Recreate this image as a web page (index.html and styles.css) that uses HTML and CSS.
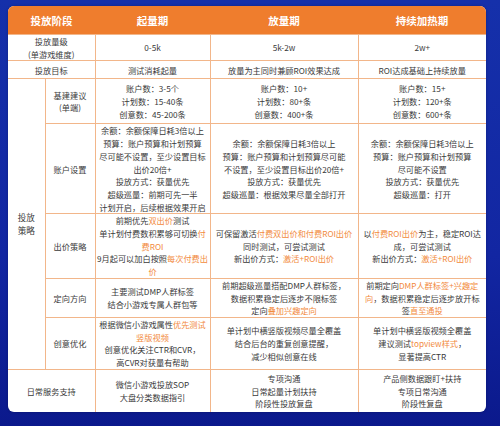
FILE: index.html
```html
<!DOCTYPE html>
<html lang="zh">
<head>
<meta charset="utf-8">
<link rel="stylesheet" href="styles.css">
</head>
<body>
<div class="card">
<table class="plan">
<colgroup>
<col class="c1"><col class="c2"><col class="c3"><col class="c4"><col class="c5">
</colgroup>
<thead>
<tr class="hd">
<th colspan="2">投放阶段</th>
<th>起量期</th>
<th>放量期</th>
<th>持续加热期</th>
</tr>
</thead>
<tbody>
<tr class="r1">
<td colspan="2">投放量级<br>(单游戏维度)</td>
<td>0-5k</td>
<td>5k-2w</td>
<td>2w+</td>
</tr>
<tr class="r2">
<td colspan="2">投放目标</td>
<td>测试消耗起量</td>
<td>放量为主同时兼顾ROI效果达成</td>
<td>ROI达成基础上持续放量</td>
</tr>
<tr class="r3">
<td rowspan="5" class="group">投放<br>策略</td>
<td>基建建议<br>(单端)</td>
<td>账户数：3-5个<br>计划数：15-40条<br>创意数：45-200条</td>
<td>账户数：10+<br>计划数：80+条<br>创意数：400+条</td>
<td>账户数：15+<br>计划数：120+条<br>创意数：600+条</td>
</tr>
<tr class="r4">
<td>账户设置</td>
<td>余额：余额保障日耗3倍以上<br>预算：账户预算和计划预算<br>尽可能不设置，至少设置目标<br>出价20倍+<br>投放方式：获量优先<br>超级巡量：前期可先一半<br>计划开启，后续根据效果开启</td>
<td>余额：余额保障日耗3倍以上<br>预算：账户预算和计划预算尽可能<br>不设置，至少设置目标出价20倍+<br>投放方式：获量优先<br>超级巡量：根据效果尽量全部打开</td>
<td>余额：余额保障日耗3倍以上<br>预算：账户预算和计划预算<br>尽可能不设置<br>投放方式：获量优先<br>超级巡量：打开</td>
</tr>
<tr class="r5">
<td>出价策略</td>
<td>前期优先<span class="hl">双出价</span>测试<br>单计划付费数积累够可切换<span class="hl">付<br>费ROI</span><br>9月起可以加白按照<span class="hl">每次付费出<br>价</span></td>
<td>可保留激活<span class="hl">付费双出价和付费ROI出价</span><br>同时测试，可尝试测试<br>新出价方式：<span class="hl">激活+ROI出价</span></td>
<td>以<span class="hl">付费ROI出价</span>为主，稳定ROI达<br>成，可尝试测试<br>新出价方式：<span class="hl">激活+ROI出价</span></td>
</tr>
<tr class="r6">
<td>定向方向</td>
<td>主要测试DMP人群标签<br>结合小游戏专属人群包等</td>
<td>前期超级巡量搭配DMP人群标签，<br>数据积累稳定后逐步不限标签<br>定向<span class="hl">叠加兴趣定向</span></td>
<td>前期定向<span class="hl">DMP人群标签+兴趣定<br>向</span>，数据积累稳定后逐步放开标<br>签<span class="hl">直至通投</span></td>
</tr>
<tr class="r7">
<td>创意优化</td>
<td>根据微信小游戏属性<span class="hl">优先测试<br>竖版视频</span><br>创意优化关注CTR和CVR，<br>高CVR对获量有帮助</td>
<td>单计划中横竖版视频尽量全覆盖<br>结合后台的重复创意提醒，<br>减少相似创意在线</td>
<td>单计划中横竖版视频全覆盖<br>建议测试<span class="hl">topview样式</span>，<br>显著提高CTR</td>
</tr>
<tr class="r8">
<td colspan="2">日常服务支持</td>
<td>微信小游戏投放SOP<br>大盘分类数据指引</td>
<td>专项沟通<br>日常起量计划扶持<br>阶段性投放复盘</td>
<td>产品侧数据跟盯+扶持<br>专项日常沟通<br>阶段性复盘</td>
</tr>
</tbody>
</table>
</div>
</body>
</html>
```
FILE: styles.css
```css
html, body {
  margin: 0;
  padding: 0;
}
body {
  width: 500px;
  height: 426px;
  overflow: hidden;
  background: linear-gradient(180deg, #1530aa 0%, #1226a2 60%, #0b198c 100%);
  font-family: "Noto Sans CJK SC", "Noto Sans", sans-serif;
}
.card {
  margin: 6px 0 0 8px;
  width: 478px;
  background: #ffffff;
  border-radius: 6px;
  overflow: hidden;
  box-shadow: 0 0 3px rgba(0, 0, 0, 0.25);
}
.plan {
  width: 478px;
  table-layout: fixed;
  border-collapse: collapse;
  border-style: hidden;
}
.c1 { width: 37px; }
.c2 { width: 50px; }
.c3 { width: 115px; }
.c4 { width: 148px; }
.c5 { width: 128px; }
.plan th {
  background: #ef7d2d;
  color: #ffffff;
  font-size: 10.5px;
  font-weight: 700;
  height: 28px;
  padding: 0;
  border: none;
  text-align: center;
  vertical-align: middle;
}
.plan td {
  border: 1px solid #f2b68a;
  padding: 0;
  text-align: center;
  vertical-align: middle;
  font-size: 8.2px;
  line-height: 12.7px;
  color: #3a3a3a;
  white-space: nowrap;
}
.plan td.group {
  font-size: 8.6px;
}
.hl {
  color: #f28a3c;
}
.r1 { height: 26px; }
.r2 { height: 18px; }
.r3 { height: 45px; }
.r4 { height: 89px; }
.r5 { height: 63px; }
.r6 { height: 39px; }
.r7 { height: 51px; }
.r8 { height: 43px; }
```
